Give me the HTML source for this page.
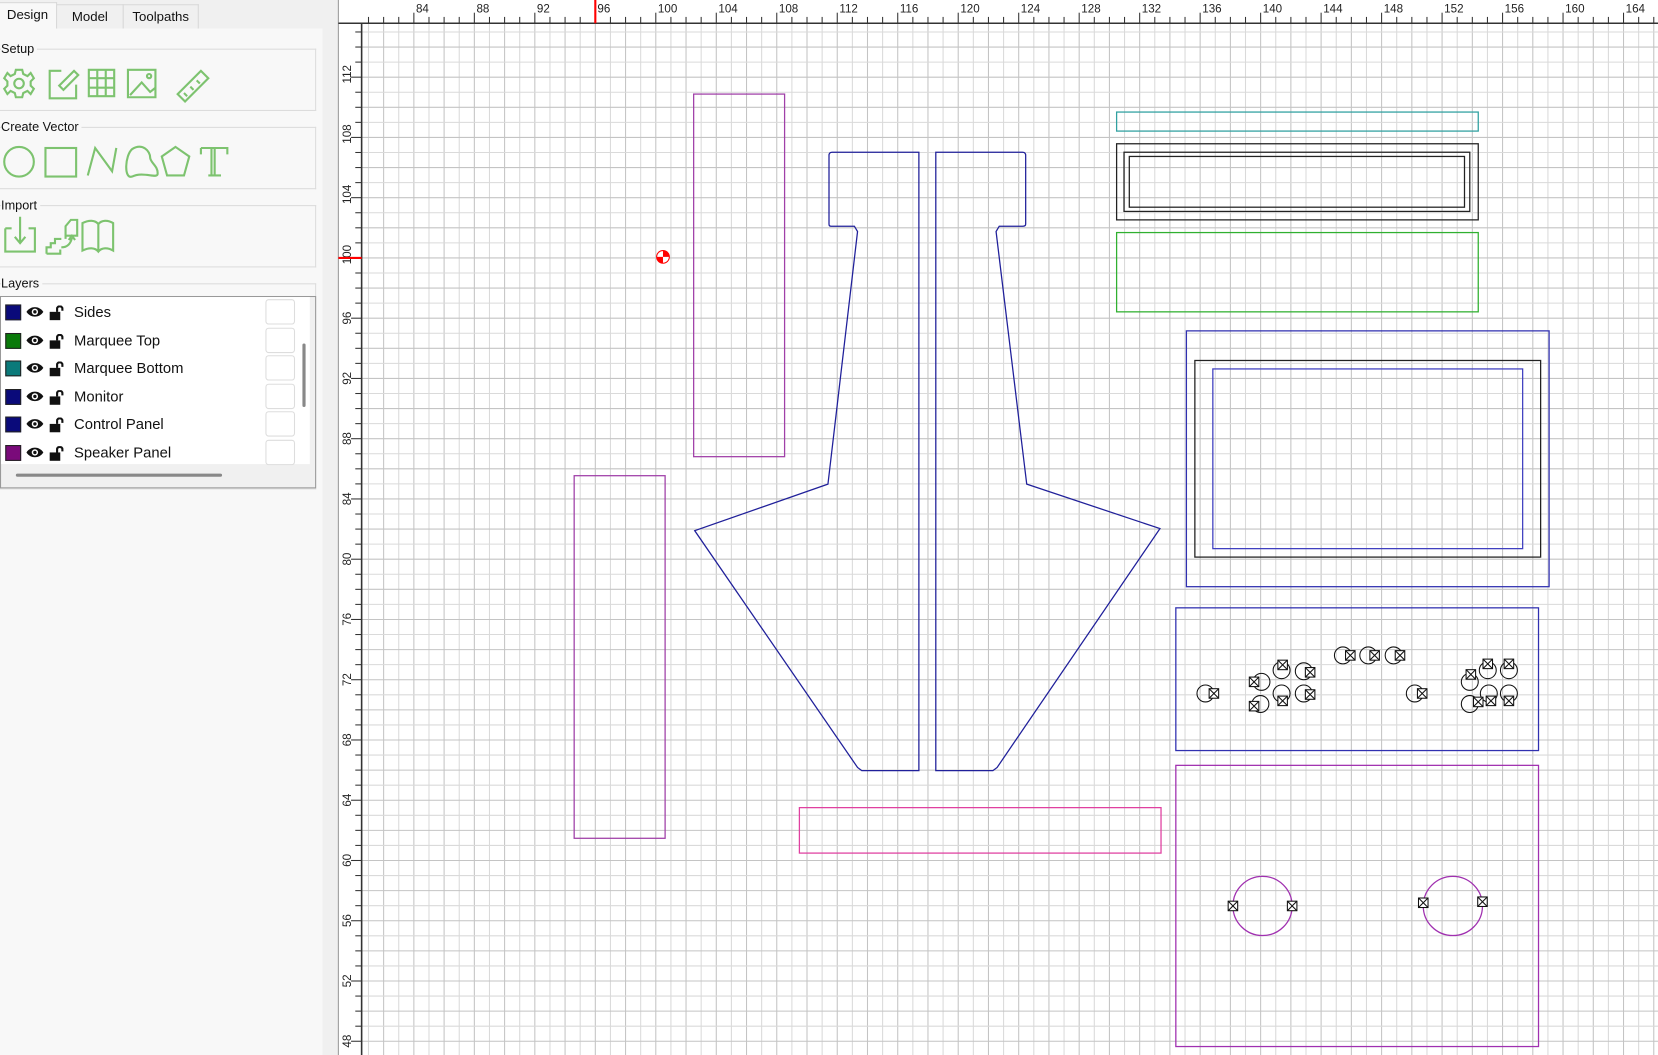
<!DOCTYPE html>
<html><head><meta charset="utf-8">
<style>
html,body{margin:0;padding:0;width:1658px;height:1055px;overflow:hidden;background:#f0f0f0;font-family:"Liberation Sans",sans-serif;}
#wrap{position:absolute;left:0;top:0;width:1568px;height:998px;transform:scale(1.05740,1.05711);transform-origin:0 0;}
.tab{position:absolute;top:4px;height:22px;font-size:12.5px;line-height:22px;color:#111;border:1px solid #d8d8d8;border-bottom:none;background:#f0f0f0;text-align:center}
.panel{position:absolute;left:0;top:27px;width:305px;height:971px;background:#f8f8f8;border-right:1px solid #ddd}
.grp{position:absolute;left:0;width:298px;border:1px solid #dcdcdc;border-left:none}
.gl{position:absolute;left:1px;font-size:12px;color:#111;background:#f8f8f8;padding-right:3px}
.layer{position:absolute;left:4px;height:26px;font-size:14px;color:#111;line-height:26px}
.sw{position:absolute;left:1px;top:6px;width:13px;height:13px;border:1px solid #222}
.nm{position:absolute;left:66px;white-space:nowrap}
.bx{position:absolute;left:247px;width:26px;height:22px;border:1px solid #ddd;border-radius:3px;background:#fff}
</style></head><body><div id="wrap">
<div class="tab" style="left:-2px;width:54px;top:2px;height:25px;background:#f8f8f8">Design</div>
<div class="tab" style="left:53px;width:62px">Model</div>
<div class="tab" style="left:116px;width:70px">Toolpaths</div>
<div class="panel">
 <div class="grp" style="top:19px;height:57px"></div><div class="gl" style="top:12px">Setup</div>
 <div class="grp" style="top:93px;height:57px"></div><div class="gl" style="top:86px">Create Vector</div>
 <div class="grp" style="top:167px;height:57px"></div><div class="gl" style="top:160px">Import</div>
 <div class="grp" style="top:241px;height:193px"></div><div class="gl" style="top:234px">Layers</div>
 <div style="position:absolute;left:0;top:253px;width:297px;height:180px;border:1px solid #999;background:#f0f0f0">
  <div style="position:absolute;left:0;top:0;width:292px;height:158px;background:#fff"></div>
  <div style="position:absolute;left:285px;top:44px;width:3px;height:60px;background:#888;border-radius:2px"></div>
  <div style="position:absolute;left:14px;top:167px;width:195px;height:3px;background:#888;border-radius:2px"></div>
 </div>
</div>
<svg style="position:absolute;left:0;top:27px" width="305" height="230" fill="none" stroke="#7dc36f" stroke-width="2">
 <g transform="translate(18,52)"><circle r="4.5"/><path d="M-3,-13 L3,-13 L4,-9 L8,-7 L11,-10 L14,-5 L11,-2 L11,2 L14,5 L11,10 L8,7 L4,9 L3,13 L-3,13 L-4,9 L-8,7 L-11,10 L-14,5 L-11,2 L-11,-2 L-14,-5 L-11,-10 L-8,-7 L-4,-9 Z"/></g>
 <path d="M58,40 H47 V66 H72 V53 M60,58 L74,44 L70,40 L56,54 Z"/>
 <path d="M84,39 H108 V64 H84 Z M92,39 V64 M100,39 V64 M84,47 H108 M84,56 H108"/>
 <path d="M121,39 H147 V65 H121 Z M123,63 L134,51 L142,60 L147,56"/><circle cx="141" cy="45" r="2"/>
 <path d="M168,62 L190,40 L197,47 L175,69 Z M174,61 L177,64 M180,55 L183,58 M186,49 L189,52"/>
 <circle cx="18" cy="126" r="14"/><rect x="43" y="113" width="29" height="27"/>
 <path d="M83,139 L90,113 L106,135 L110,113"/>
 <path d="M125,114 C135,108 142,116 142,122 C142,127 150,130 149,138 C148,142 135,135 125,140 C117,143 118,120 125,114 Z"/>
 <path d="M166,112 L179,121 L174,139 L158,139 L153,121 Z"/>
 <path d="M190,113 H215 V119 M190,113 V119 M203,113 V139 M197,139 H209 M200,113 V139"/>
 <path d="M5,189 V211 H33 V189 H27 M11,189 H5 M19,178 V203 M14,197 L19,203 L24,197"/>
 <path d="M44,213 H57 V209 M44,213 V207 H48 V203 H52 V199 H58 M62,199 V187 L67,181 H73 V196 H62 M58,207 C64,207 67,203 68,198 M65,200 L68,196 L71,200"/>
 <path d="M78,184 C84,181 90,181 93,185 C96,181 102,181 107,184 V210 C102,207 96,207 93,211 C90,207 84,207 78,210 Z M93,185 V211"/>
</svg>
<div id="layers" style="position:absolute;left:0;top:282px"></div>
<svg id="cv" style="position:absolute;left:0;top:0" width="1568" height="998"></svg>
</div>
<script>
var L=[["Sides","#0a0a7a"],["Marquee Top","#0a7a0a"],["Marquee Bottom","#0a7a7a"],["Monitor","#0a0a7a"],["Control Panel","#0a0a7a"],["Speaker Panel","#7a0a7a"]];
var h="";L.forEach(function(l,i){var t=i*26.5;
h+='<div class="layer" style="top:'+t+'px;width:290px"><div class="sw" style="background:'+l[1]+'"></div>'+
'<svg style="position:absolute;left:20px;top:7px" width="40" height="14"><path d="M1,6 C5,0 13,0 17,6 C13,12 5,12 1,6 Z" fill="#111"/><circle cx="9" cy="6" r="3" fill="#fff"/><circle cx="9" cy="6" r="1.6" fill="#111"/>'+
'<rect x="23" y="6" width="10" height="8" fill="#111"/><path d="M30,6 V3 C30,0 35,0 35,3 V5" stroke="#111" stroke-width="2" fill="none"/></svg>'+
'<div class="nm">'+l[0]+'</div><div class="bx" style="top:1px"></div></div>';});
document.getElementById("layers").innerHTML=h;
var s="";
function X(u){return 563+(u-96)*14.3;}function Y(v){return 244-(v-100)*14.25;}
s+='<rect x="320" y="0" width="1248" height="998" fill="#fff"/>';
s+='<rect x="305" y="0" width="15" height="998" fill="#f0f0f0"/><line x1="320" y1="0" x2="320" y2="998" stroke="#999"/>';
for(var u=78;u<168;u++){var x=X(u);if(x<342)continue;s+='<line x1="'+x+'" y1="22" x2="'+x+'" y2="998" stroke="'+(u%2?'#dadada':'#c4c4c4')+'"/>';
 s+='<line x1="'+x+'" y1="'+(u%4?16:12)+'" x2="'+x+'" y2="22" stroke="#333"/>';
 if(u%4==0)s+='<text x="'+(x+2)+'" y="12" font-size="11" fill="#222">'+(u==80?'0':u)+'</text>';}
for(var v=46;v<117;v++){var y=Y(v);if(y<22)continue;s+='<line x1="342" y1="'+y+'" x2="1568" y2="'+y+'" stroke="'+(v%2?'#dadada':'#c4c4c4')+'"/>';
 s+='<line x1="'+(v%4?336:332)+'" y1="'+y+'" x2="342" y2="'+y+'" stroke="#333"/>';
 if(v%4==0)s+='<text transform="translate(332,'+(y+6)+') rotate(-90)" font-size="11" fill="#222">'+v+'</text>';}
s+='<line x1="342" y1="22" x2="342" y2="998" stroke="#333" stroke-width="1.5"/><line x1="320" y1="22" x2="1568" y2="22" stroke="#333" stroke-width="1.5"/>';
s+='<line x1="563" y1="0" x2="563" y2="22" stroke="red" stroke-width="2"/><line x1="320" y1="244" x2="342" y2="244" stroke="red" stroke-width="2"/>';
function R(x1,y1,x2,y2,c){s+='<rect x="'+x1+'" y="'+y1+'" width="'+(x2-x1)+'" height="'+(y2-y1)+'" fill="none" stroke="'+c+'" stroke-width="1.2"/>';}
R(656,89,742,432,"#a040a8");R(543,450,629,793,"#a040a8");R(756,764,1098,807,"#e040a0");
R(1056,106,1398,124,"#30a0a0");R(1056,136,1398,208,"#222");R(1063,144,1390,200,"#222");R(1068,148,1385,196,"#222");
R(1056,220,1398,295,"#30b030");R(1122,313,1465,555,"#3030b0");R(1130,341,1457,527,"#222");R(1147,349,1440,519,"#4040c0");
R(1112,575,1455,710,"#3030b0");R(1112,724,1455,990,"#a030b0");
s+='<path d="M787,144 H869 V729 H815 L811,726 L657,502 L783,458 L811,219 L808,214 H786 Q784,214 784,212 V147 Q784,144 787,144 Z" fill="none" stroke="#20209a" stroke-width="1.2"/>';
s+='<path d="M885,144 H967 Q970,144 970,147 V212 Q970,214 967,214 H945 L942,219 L971,458 L1097,500 L943,726 L939,729 H885 Z" fill="none" stroke="#20209a" stroke-width="1.2"/>';
s+='<circle cx="1194" cy="857" r="28" fill="none" stroke="#a030b0" stroke-width="1.2"/><circle cx="1374" cy="857" r="28" fill="none" stroke="#a030b0" stroke-width="1.2"/>';
function B(x,y){s+='<rect x="'+(x-4.5)+'" y="'+(y-4.5)+'" width="9" height="9" fill="#fff" stroke="#111"/><path d="M'+(x-4.5)+','+(y-4.5)+' L'+(x+4.5)+','+(y+4.5)+' M'+(x+4.5)+','+(y-4.5)+' L'+(x-4.5)+','+(y+4.5)+'" stroke="#111"/>';}
function C(x,y){s+='<circle cx="'+x+'" cy="'+y+'" r="8" fill="none" stroke="#111"/>';}
B(1166,857);B(1222,857);B(1346,854);B(1402,853);
[[1140,656,1148,656],[1193,645,1186,645],[1212,634,1213,629],[1233,635,1239,636],[1212,656,1213,663],[1233,656,1239,657],[1192,666,1186,668],[1270,620,1277,620],[1294,620,1300,620],[1318,620,1324,620],[1338,656,1345,656],[1390,645,1391,638],[1407,634,1407,628],[1427,634,1427,628],[1408,656,1410,663],[1427,656,1427,663],[1390,666,1398,664]].forEach(function(a){C(a[0],a[1]);B(a[2],a[3]);});
s+='<circle cx="627" cy="243" r="6.5" fill="red"/><path d="M627,243 V237.5 A5.5,5.5 0 0 0 621.5,243 Z M627,243 V248.5 A5.5,5.5 0 0 0 632.5,243 Z" fill="#fff"/>';
document.getElementById("cv").innerHTML=s;
</script>
</body></html>
